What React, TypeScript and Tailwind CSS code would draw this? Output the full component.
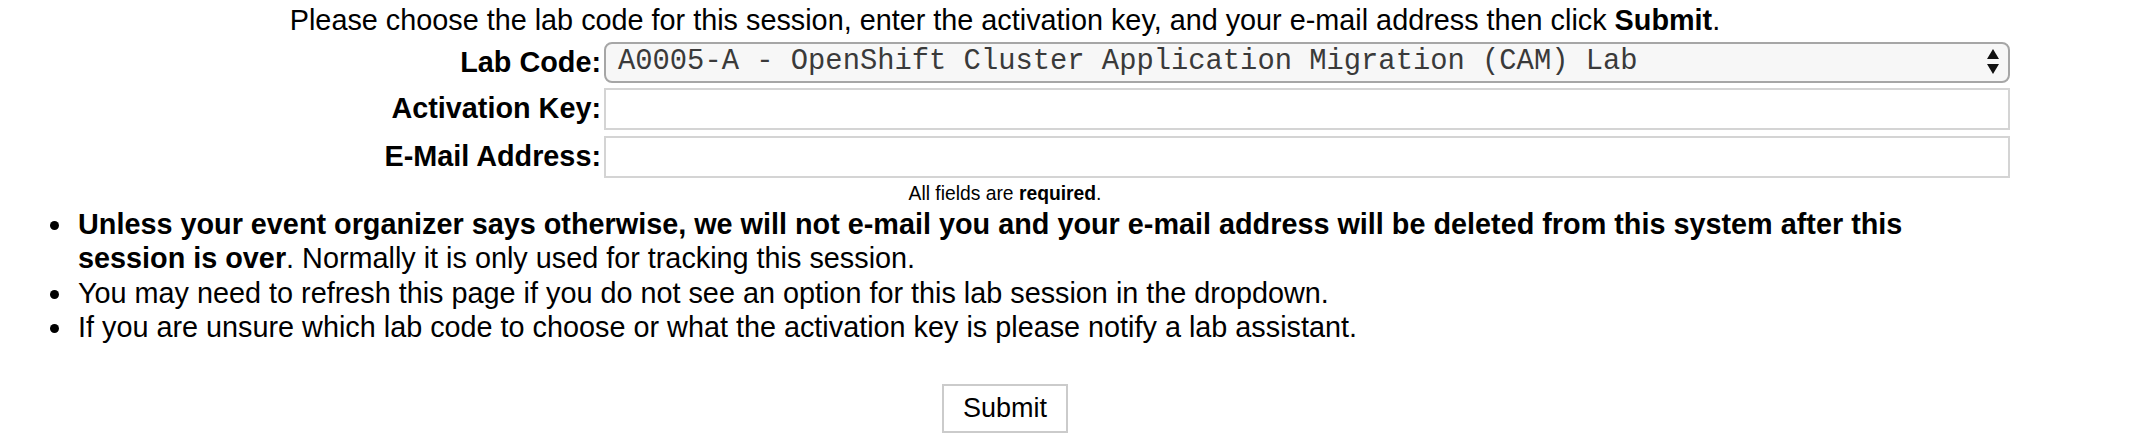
import React from "react";

// ─── Pieces ──────────────────────────────────────────────────────────────────

function SelectArrows() {
  return (
    <svg width="12" height="26" viewBox="0 0 12 26" className="flex-shrink-0">
      <path d="M6 0 L12 10 L0 10 Z" fill="#111" />
      <path d="M0 15 L12 15 L6 25 Z" fill="#111" />
    </svg>
  );
}

function LabSelect() {
  return (
    <div className="h-[41px] flex items-center justify-between rounded-[8px] border-2 border-[#a6a6a6] bg-[#f7f7f7] pl-[12px] pr-[9px]">
      <span className="font-['Liberation_Mono',monospace] text-[28.8px] leading-none text-[#3a3a3a] whitespace-pre">
        A0005-A - OpenShift Cluster Application Migration (CAM) Lab
      </span>
      <SelectArrows />
    </div>
  );
}

function TextInput() {
  return <input type="text" className="h-[42px] w-full border-2 border-[#d4d4d4] bg-white px-2 outline-none" />;
}

// ─── Page ────────────────────────────────────────────────────────────────────

export default function App() {
  return (
    <div className="w-[2010px] min-h-[437px] bg-white text-black font-['Liberation_Sans',Arial,sans-serif] text-[28.8px] leading-[1.2]">
      <p className="pt-[3px] text-center">
        Please choose the lab code for this session, enter the activation key, and your e-mail address then click <b>Submit</b>.
      </p>

      <div className="mt-[4px] grid grid-cols-[601px_1fr] gap-x-[3px] items-center">
        <label className="text-right font-bold">Lab Code:</label>
        <LabSelect />
        <label className="mt-[5px] text-right font-bold">Activation Key:</label>
        <div className="mt-[5px]">
          <TextInput />
        </div>
        <label className="mt-[6px] text-right font-bold">E-Mail Address:</label>
        <div className="mt-[6px]">
          <TextInput />
        </div>
      </div>

      <p className="mt-[3px] text-center text-[19.3px] leading-[26px]">
        All fields are <b>required</b>.
      </p>

      <ul className="list-disc pl-[74px] [&>li]:pl-[4px]">
        <li>
          <b>
            Unless your event organizer says otherwise, we will not e-mail you and your e-mail address will be deleted from this system after this
            <br />
            session is over
          </b>
          . Normally it is only used for tracking this session.
        </li>
        <li>You may need to refresh this page if you do not see an option for this lab session in the dropdown.</li>
        <li>If you are unsure which lab code to choose or what the activation key is please notify a lab assistant.</li>
      </ul>

      <div className="mt-[39px] flex justify-center">
        <button className="w-[126px] h-[49px] border-2 border-[#cbcbcb] bg-white text-[27px] leading-none text-black">
          Submit
        </button>
      </div>
    </div>
  );
}
